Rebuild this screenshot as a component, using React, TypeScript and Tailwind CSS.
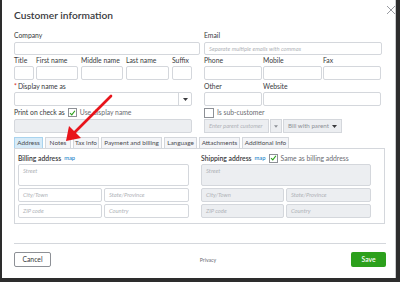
import React from "react";

const Label = ({ children, className = "" }: { children: React.ReactNode; className?: string }) => (
  <div className={`h-full flex items-center text-[6.8px] text-[#393a3d] ${className}`}>{children}</div>
);

const Field = ({ w, h = "h-[14px]", gray = false, placeholder = "" }: { w: string; h?: string; gray?: boolean; placeholder?: string }) => (
  <div
    className={`${w} ${h} border border-[#d4d7dc] rounded-[2px] ${gray ? "bg-[#eceef1]" : "bg-white"} px-[4px] pt-[3px] text-[5.8px] italic text-[#b0b3b8] leading-none whitespace-nowrap`}
  >
    {placeholder}
  </div>
);

const Check = () => (
  <div className="w-[9px] h-[9px] border border-[#8d9096] bg-white flex items-center justify-center shrink-0">
    <svg width="8" height="8" viewBox="0 0 8 8">
      <path d="M1.2 4.2 L3.2 6.2 L6.8 1.4" fill="none" stroke="#2ca01c" strokeWidth="1.3" />
    </svg>
  </div>
);

const Caret = () => (
  <svg width="5" height="3" viewBox="0 0 5 3">
    <path d="M0 0 L5 0 L2.5 3 Z" fill="#393a3d" />
  </svg>
);

const tabs = [
  { label: "Address", w: "w-[29px]", active: true },
  { label: "Notes", w: "w-[26px]" },
  { label: "Tax info", w: "w-[26px]" },
  { label: "Payment and billing", w: "w-[61px]" },
  { label: "Language", w: "w-[33px]" },
  { label: "Attachments", w: "w-[41px]" },
  { label: "Additional Info", w: "w-[47px]" },
];

export default function App() {
  return (
    <div
      className="w-[400px] h-[282px] bg-[#2d2d2d] overflow-hidden"
      style={{ fontFamily: 'Lato, "Open Sans", "Liberation Sans", sans-serif' }}
    >
      <div className="relative ml-[2px] w-[394px] h-[278px] bg-white border-r border-[#c9cbcd] pl-[12px]">
        {/* close */}
        <svg className="absolute left-[384px] top-[5px]" width="10" height="10" viewBox="0 0 10 10">
          <path d="M1 1 L9 9 M9 1 L1 9" stroke="#8d9096" strokeWidth="0.9" />
        </svg>

        <div className="h-[28px] flex items-center pt-[4px] text-[10.2px] font-semibold text-[#393a3d]">
          Customer information
        </div>

        <div className="flex gap-[4px]">
          {/* left column */}
          <div className="w-[186px] flex flex-col">
            <div className="h-[14px] pt-[1px]"><Label>Company</Label></div>
            <Field w="w-[186px]" h="h-[13px]" />
            <div className="h-[11px] flex">
              <Label className="w-[22px]">Title</Label>
              <Label className="w-[45px]">First name</Label>
              <Label className="w-[45px]">Middle name</Label>
              <Label className="w-[46px]">Last name</Label>
              <Label>Suffix</Label>
            </div>
            <div className="flex h-[14px]">
              <Field w="w-[20px] mr-[2px]" />
              <Field w="w-[42px] mr-[3px]" />
              <Field w="w-[42px] mr-[3px]" />
              <Field w="w-[43px] mr-[3px]" />
              <Field w="w-[20px]" />
            </div>
            <div className="h-[12px]">
              <Label>
                <span className="text-[#d52b1e] mr-[1px]">*</span>Display name as
              </Label>
            </div>
            <div className="w-[178px] h-[14px] border border-[#d4d7dc] rounded-[2px] flex">
              <div className="flex-1" />
              <div className="w-[13px] border-l border-[#d4d7dc] flex items-center justify-center">
                <Caret />
              </div>
            </div>
            <div className="h-[13px] flex items-center gap-[3px] text-[6.8px] text-[#393a3d]">
              <span>Print on check as</span>
              <Check />
              <span className="text-[#6b6c72]">Use display name</span>
            </div>
            <Field w="w-[178px]" gray />
          </div>

          {/* right column */}
          <div className="w-[178px] flex flex-col">
            <div className="h-[14px] pt-[1px]"><Label>Email</Label></div>
            <Field w="w-[178px]" h="h-[13px]" placeholder="Separate multiple emails with commas" />
            <div className="h-[11px] flex">
              <Label className="w-[59px]">Phone</Label>
              <Label className="w-[60px]">Mobile</Label>
              <Label>Fax</Label>
            </div>
            <div className="flex h-[14px] gap-[1px]">
              <Field w="w-[58px]" />
              <Field w="w-[59px]" />
              <Field w="w-[58px]" />
            </div>
            <div className="h-[12px] flex">
              <Label className="w-[59px]">Other</Label>
              <Label>Website</Label>
            </div>
            <div className="flex h-[14px] gap-[1px]">
              <Field w="w-[58px]" />
              <Field w="w-[118px]" />
            </div>
            <div className="h-[13px] flex items-center gap-[3px] text-[6.8px] text-[#6b6c72]">
              <div className="w-[10px] h-[10px] border border-[#8d9096] bg-white" />
              <span>Is sub-customer</span>
            </div>
            <div className="flex h-[14px] gap-[1px]">
              <div className="w-[65px] h-[14px] border border-[#d4d7dc] bg-[#eceef1] pl-[4px] flex items-center text-[5.8px] italic text-[#b0b3b8] whitespace-nowrap">
                Enter parent customer
              </div>
              <div className="w-[12px] h-[14px] border border-[#d4d7dc] bg-[#eceef1] flex items-center justify-center">
                <svg width="4" height="3" viewBox="0 0 5 3"><path d="M0 0 L5 0 L2.5 3 Z" fill="#8d9096" /></svg>
              </div>
              <div className="w-[59px] h-[14px] border border-[#d4d7dc] bg-[#eceef1] px-[4px] flex items-center justify-between text-[6.2px] text-[#8d9096]">
                <span>Bill with parent</span>
                <Caret />
              </div>
            </div>
          </div>
        </div>

        {/* tabs */}
        <div className="mt-[4px] h-[11px] flex gap-[2px]">
          {tabs.map((t) => (
            <div
              key={t.label}
              className={`${t.w} h-[11px] border border-b-0 flex items-center justify-center text-[6.4px] whitespace-nowrap text-[#4a4b50] ${
                t.active ? "bg-[#d7ebf8] border-[#a9d3ee]" : "bg-[#f4f5f8] border-[#d4d7dc]"
              }`}
            >
              {t.label}
            </div>
          ))}
        </div>

        {/* address panel */}
        <div className="w-[371px] h-[76px] border border-[#d4d7dc] flex gap-[12px] pl-[3px] pt-[3px]">
          <div className="w-[171px] flex flex-col">
            <div className="h-[12px] flex items-center gap-[3px] text-[6.8px]">
              <span className="font-semibold text-[#393a3d]">Billing address</span>
              <span className="text-[#0077c5] text-[5.8px]">map</span>
            </div>
            <Field w="w-[171px]" h="h-[22px]" placeholder="Street" />
            <div className="flex gap-[2px] mt-[2px]">
              <Field w="w-[84px]" placeholder="City/Town" />
              <Field w="w-[85px]" placeholder="State/Province" />
            </div>
            <div className="flex gap-[2px] mt-[2px]">
              <Field w="w-[84px]" placeholder="ZIP code" />
              <Field w="w-[85px]" placeholder="Country" />
            </div>
          </div>
          <div className="w-[171px] flex flex-col">
            <div className="h-[12px] flex items-center gap-[3px] text-[6.8px]">
              <span className="font-semibold text-[#393a3d]">Shipping address</span>
              <span className="text-[#0077c5] text-[5.8px]">map</span>
              <Check />
              <span className="text-[#6b6c72]">Same as billing address</span>
            </div>
            <Field w="w-[170px]" h="h-[22px]" gray placeholder="Street" />
            <div className="flex gap-[2px] mt-[2px]">
              <Field w="w-[83px]" gray placeholder="City/Town" />
              <Field w="w-[85px]" gray placeholder="State/Province" />
            </div>
            <div className="flex gap-[2px] mt-[2px]">
              <Field w="w-[83px]" gray placeholder="ZIP code" />
              <Field w="w-[85px]" gray placeholder="Country" />
            </div>
          </div>
        </div>

        {/* footer */}
        <div className="mt-[19px] w-[372px] border-t border-[#d4d7dc]" />
        <div className="mt-[8px] w-[372px] flex items-center justify-between">
          <div className="w-[37px] h-[15px] border border-[#8d9096] rounded-[2px] flex items-center justify-center text-[6.8px] text-[#393a3d]">
            Cancel
          </div>
          <div className="text-[5.2px] text-[#6b6c72] mt-[2px] ml-[14px]">Privacy</div>
          <div className="w-[35px] h-[15px] bg-[#2ca01c] rounded-[2px] flex items-center justify-center text-[6.8px] font-semibold text-white">
            Save
          </div>
        </div>

        {/* annotation arrow */}
        <svg className="absolute left-[0px] top-[0px] pointer-events-none" width="394" height="278">
          <line x1="109" y1="96" x2="72" y2="133" stroke="#e8141b" strokeWidth="2.6" strokeLinecap="round" />
          <path d="M64 141 L67 126 L79 138 Z" fill="#e8141b" />
        </svg>
      </div>
    </div>
  );
}
